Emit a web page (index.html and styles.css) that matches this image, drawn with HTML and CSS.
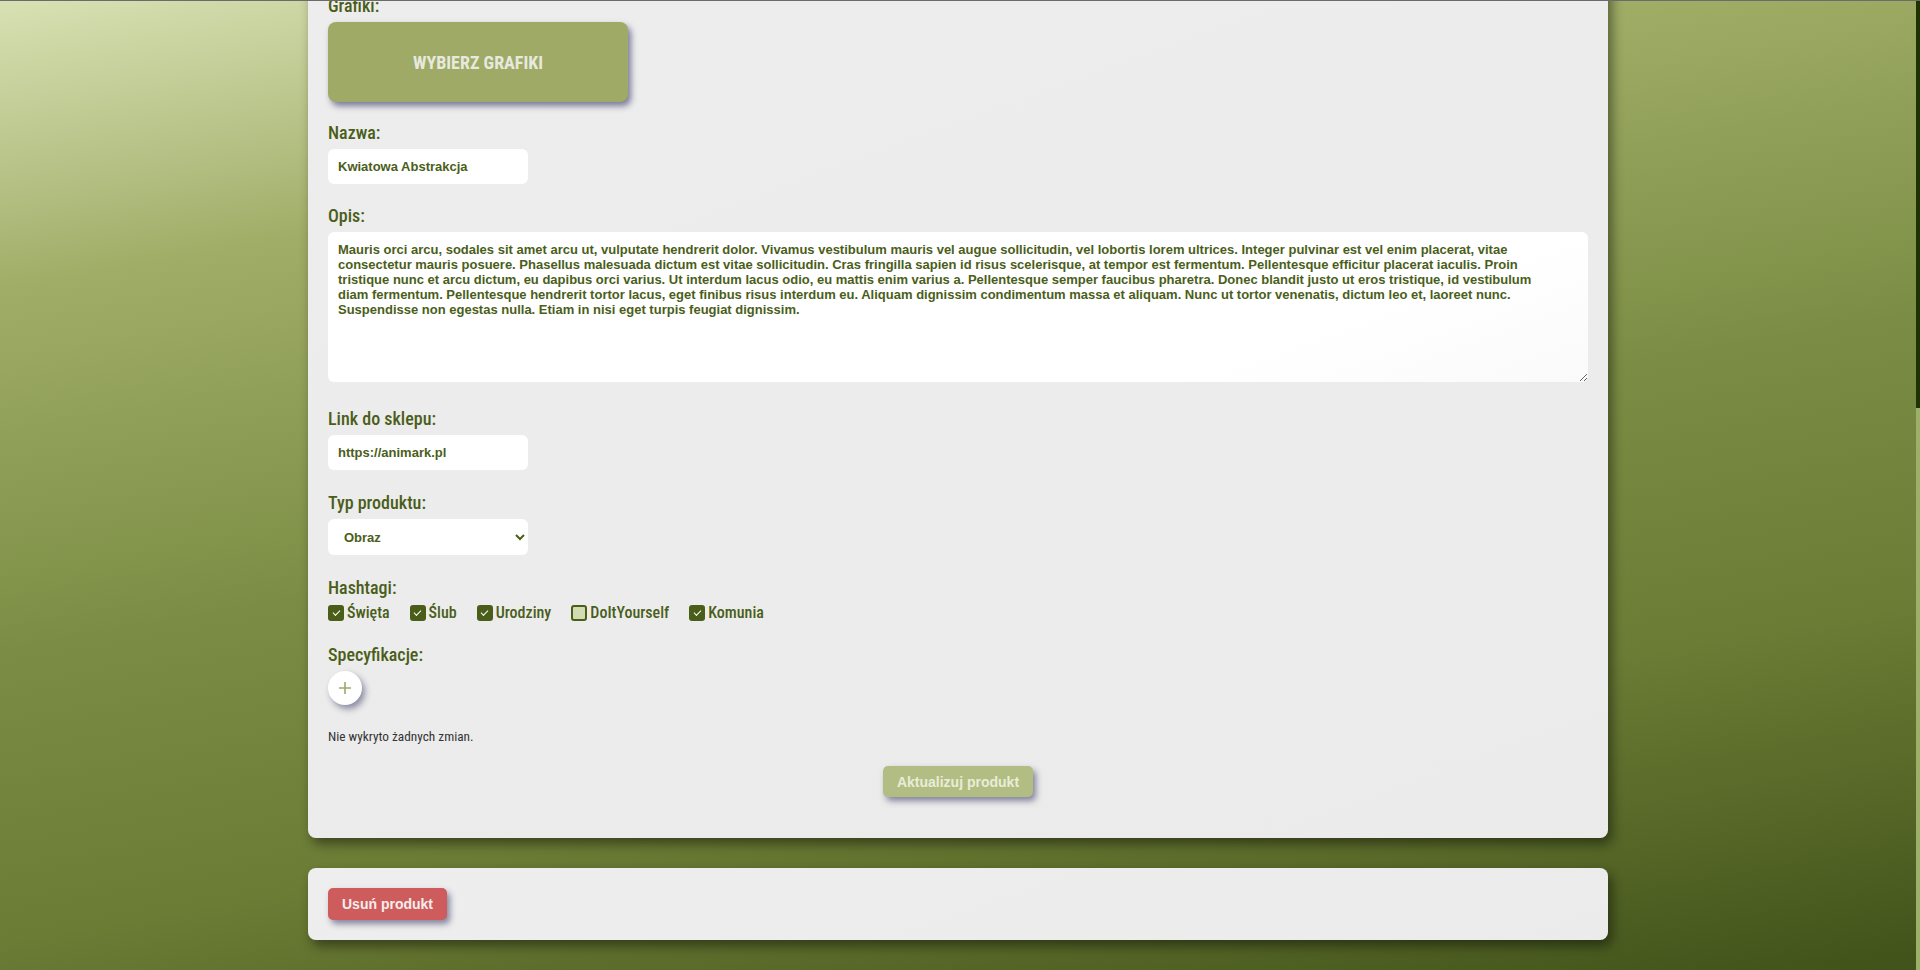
FILE: index.html
```html
<!DOCTYPE html>
<html lang="pl">
<head>
<meta charset="utf-8">
<title>Edytuj produkt</title>
<link rel="stylesheet" href="styles.css">
</head>
<body>
<div class="viewport">
  <div class="scroller">
    <main class="page">
      <section class="card">
        <h1 class="title">Edytuj produkt</h1>
        <div class="field">
          <span class="label">Podgląd:</span>
          <div class="gallery">
            <div class="thumb t1"></div>
            <div class="thumb t2"></div>
            <div class="thumb t3"></div>
            <div class="thumb t4"></div>
            <div class="thumb t2"></div>
            <div class="thumb t1"></div>
            <div class="thumb t4"></div>
            <div class="thumb t3"></div>
          </div>
        </div>

        <div class="field field-pick">
          <span class="label">Grafiki:</span>
          <button class="btn-pick" type="button">WYBIERZ GRAFIKI</button>
        </div>

        <div class="field field-name">
          <label class="label" for="name">Nazwa:</label>
          <input class="text-input" id="name" type="text" value="Kwiatowa Abstrakcja">
        </div>

        <div class="field field-desc">
          <label class="label" for="desc">Opis:</label>
          <textarea class="text-area" id="desc">Mauris orci arcu, sodales sit amet arcu ut, vulputate hendrerit dolor. Vivamus vestibulum mauris vel augue sollicitudin, vel lobortis lorem ultrices. Integer pulvinar est vel enim placerat, vitae consectetur mauris posuere. Phasellus malesuada dictum est vitae sollicitudin. Cras fringilla sapien id risus scelerisque, at tempor est fermentum. Pellentesque efficitur placerat iaculis. Proin tristique nunc et arcu dictum, eu dapibus orci varius. Ut interdum lacus odio, eu mattis enim varius a. Pellentesque semper faucibus pharetra. Donec blandit justo ut eros tristique, id vestibulum diam fermentum. Pellentesque hendrerit tortor lacus, eget finibus risus interdum eu. Aliquam dignissim condimentum massa et aliquam. Nunc ut tortor venenatis, dictum leo et, laoreet nunc. Suspendisse non egestas nulla. Etiam in nisi eget turpis feugiat dignissim.</textarea>
        </div>

        <div class="field">
          <label class="label" for="link">Link do sklepu:</label>
          <input class="text-input" id="link" type="text" value="https://animark.pl">
        </div>

        <div class="field">
          <label class="label" for="type">Typ produktu:</label>
          <select class="select" id="type">
            <option selected>Obraz</option>
            <option>Grafika</option>
            <option>Kartka</option>
          </select>
        </div>

        <div class="field">
          <span class="label">Hashtagi:</span>
          <div class="tags">
            <label class="tag"><input class="cb" type="checkbox" checked>Święta</label>
            <label class="tag"><input class="cb" type="checkbox" checked>Ślub</label>
            <label class="tag"><input class="cb" type="checkbox" checked>Urodziny</label>
            <label class="tag"><input class="cb" type="checkbox">DoItYourself</label>
            <label class="tag"><input class="cb" type="checkbox" checked>Komunia</label>
          </div>
        </div>

        <div class="field field-spec">
          <span class="label">Specyfikacje:</span>
          <button class="btn-add" type="button" aria-label="Dodaj specyfikację">
            <svg width="14" height="14" viewBox="0 0 14 14"><path d="M7 1v12M1 7h12" stroke="#9aab6a" stroke-width="1.6" fill="none"/></svg>
          </button>
        </div>

        <p class="status">Nie wykryto żadnych zmian.</p>

        <div class="actions">
          <button class="btn-update" type="button">Aktualizuj produkt</button>
        </div>
      </section>

      <section class="card card-danger">
        <div class="danger-row">
          <button class="btn-delete" type="button">Usuń produkt</button>
        </div>
      </section>
    </main>
  </div>
  <div class="scrollbar" aria-hidden="true">
    <div class="scrollbar-track"></div>
    <div class="scrollbar-thumb"></div>
  </div>
</div>
</body>
</html>
```

FILE: styles.css
```css
html, body {
  margin: 0;
  height: 100%;
}

body {
  box-sizing: border-box;
  border-top: 1px solid #6b6b6b;
  overflow: hidden;
  font-family: "Liberation Sans", Arial, sans-serif;
}

.viewport {
  height: calc(100vh - 1px);
  display: flex;
  background: linear-gradient(170deg, #d7e1b3 0%, #b3be82 15%, #a0ad66 22%, #7b8d44 50%, #6b7c35 72%, #41521a 100%);
}

.scroller {
  flex: 1;
  min-width: 0;
  overflow: hidden;
  display: flex;
  flex-direction: column-reverse;
}

.scrollbar {
  width: 4px;
  flex-shrink: 0;
  display: flex;
  flex-direction: column;
}

.scrollbar-track {
  flex: 1;
  background: #1f3300;
}

.scrollbar-thumb {
  height: 562px;
  background: #9db06a;
}

.page {
  flex-shrink: 0;
  display: flex;
  flex-direction: column;
  align-items: center;
  gap: 30px;
  padding: 30px 0;
}

.card {
  width: 1300px;
  box-sizing: border-box;
  background: linear-gradient(160deg, #eeeeee, #ebebeb);
  border-radius: 8px;
  padding: 20px;
  box-shadow: 4px 6px 12px rgba(0, 0, 0, 0.45);
  display: flex;
  flex-direction: column;
}

.title {
  margin: 0 0 20px;
  font: 700 28px/34px "Roboto Condensed", "Liberation Sans Narrow", Roboto, sans-serif;
  font-stretch: condensed;
  color: #4a5e1a;
}

.gallery {
  display: grid;
  grid-template-columns: repeat(4, 265px);
  grid-auto-rows: 265px;
  gap: 12px;
}

.thumb {
  border-radius: 8px;
}

.t1 { background: linear-gradient(135deg, #e8b4c0, #9aab6a); }
.t2 { background: linear-gradient(135deg, #f2d98a, #c56f6f); }
.t3 { background: linear-gradient(135deg, #a7c4e0, #6b7c35); }
.t4 { background: linear-gradient(135deg, #d8c3e8, #e6a36b); }

.field {
  display: flex;
  flex-direction: column;
  align-items: flex-start;
  gap: 6px;
  margin-bottom: 21px;
}

.field-pick {
  margin-bottom: 19px;
}

.field-name {
  margin-bottom: 20px;
}

.field-desc {
  align-items: stretch;
  margin-bottom: 25px;
}

.field-spec {
  margin-bottom: 24px;
}

.label {
  display: block;
  padding-top: 1px;
  font: 500 18px/21px "Roboto Condensed", "Liberation Sans Narrow", Roboto, sans-serif;
  font-stretch: condensed;
  color: #4a5e1a;
}

.btn-pick {
  width: 300px;
  height: 80px;
  border: none;
  border-radius: 8px;
  background: #9eaa66;
  color: #e7e8de;
  font: 700 18px "Roboto Condensed", "Liberation Sans Narrow", Roboto, sans-serif;
  font-stretch: condensed;
  box-shadow: 3px 4px 6px rgba(45, 45, 95, 0.6);
}

.text-input {
  box-sizing: border-box;
  width: 200px;
  height: 35px;
  padding: 0 10px;
  border: none;
  border-radius: 6px;
  background: #ffffff;
  color: #4a5e1a;
  font: 700 13px "Liberation Sans", Arial, sans-serif;
  outline: none;
}

.text-area {
  box-sizing: border-box;
  display: block;
  height: 150px;
  padding: 10px 24px 10px 10px;
  border: none;
  border-radius: 6px;
  background: linear-gradient(160deg, #ffffff 75%, #fafafa);
  color: #4a5e1a;
  font: 700 13px/15px "Liberation Sans", Arial, sans-serif;
  resize: vertical;
  outline: none;
}

.select {
  box-sizing: border-box;
  width: 200px;
  height: 36px;
  padding: 0 6px 0 12px;
  border: none;
  border-radius: 6px;
  background: #ffffff;
  color: #4a5e1a;
  font: 700 13px "Liberation Sans", Arial, sans-serif;
  outline: none;
}

.tags {
  display: flex;
  align-items: center;
  gap: 20px;
  height: 18px;
}

.tag {
  display: flex;
  align-items: center;
  gap: 3px;
  font: 500 16px/18px "Roboto Condensed", "Liberation Sans Narrow", Roboto, sans-serif;
  font-stretch: condensed;
  color: #4a5e1a;
}

.cb {
  appearance: none;
  -webkit-appearance: none;
  box-sizing: border-box;
  width: 16px;
  height: 16px;
  margin: 0;
  border-radius: 3px;
  background: #4a5e1a;
  display: inline-grid;
  place-content: center;
}

.cb::after {
  content: "";
  width: 6px;
  height: 3px;
  border-left: 1.6px solid #ffffff;
  border-bottom: 1.6px solid #ffffff;
  transform: translateY(-1px) rotate(-45deg);
}

.cb:not(:checked) {
  background: #d3dcb1;
  border: 2px solid #4a5e1a;
}

.cb:not(:checked)::after {
  display: none;
}

.btn-add {
  width: 34px;
  height: 34px;
  padding: 0;
  border: none;
  border-radius: 50%;
  background: #ffffff;
  display: grid;
  place-items: center;
  box-shadow: 3px 4px 6px rgba(45, 45, 95, 0.5);
}

.status {
  margin: 0 0 22px;
  font: 400 13.3px/15px "Roboto Condensed", "Liberation Sans Narrow", Roboto, sans-serif;
  font-stretch: condensed;
  color: #333333;
}

.actions {
  display: flex;
  justify-content: center;
  padding-bottom: 21px;
}

.btn-update {
  height: 31px;
  padding: 0 14px;
  border: none;
  border-radius: 5px;
  background: #b2bd84;
  color: #e8edd6;
  font: 700 14px "Liberation Sans", Arial, sans-serif;
  box-shadow: 3px 4px 6px rgba(45, 45, 95, 0.55);
}

.danger-row {
  display: flex;
}

.btn-delete {
  height: 32px;
  padding: 0 14px;
  border: none;
  border-radius: 5px;
  background: #cf5c5c;
  color: #f5eded;
  font: 700 14px "Liberation Sans", Arial, sans-serif;
  box-shadow: 3px 4px 6px rgba(45, 45, 95, 0.55);
}
```
